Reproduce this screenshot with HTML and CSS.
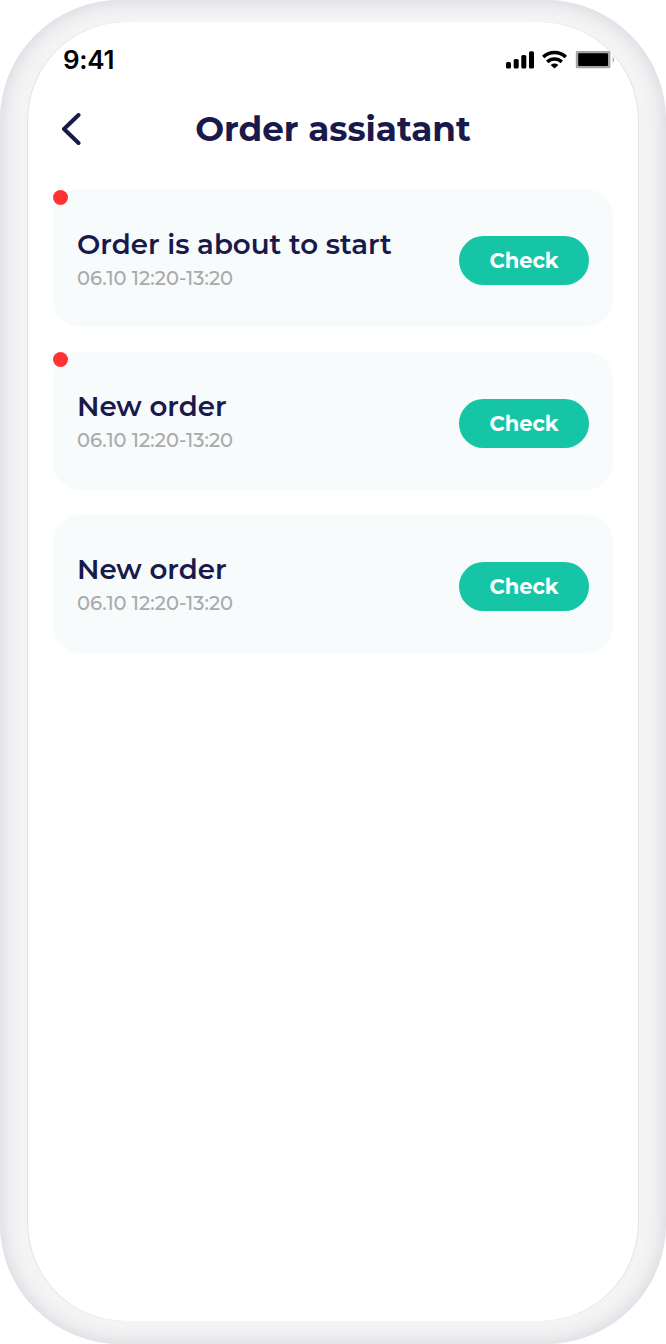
FILE: index.html
```html
<!DOCTYPE html>
<html lang="en">
<head>
  <meta charset="UTF-8" />
  <title>Order assiatant</title>
  <meta name="viewport" content="width=device-width, initial-scale=1" />
  <link rel="stylesheet" href="styles.css">
</head>
<body>
<div class="mobile-frame">
  <div class="screen">
    <div class="status-bar">
      <span class="time">9:41</span>
      <svg class="status-icons" width="110" height="20" viewBox="0 0 110 20">
        <rect x="1" y="12" width="5" height="6.5" rx="1.6"/>
        <rect x="8.7" y="9" width="5" height="9.5" rx="1.6"/>
        <rect x="16.3" y="5" width="5" height="13.5" rx="1.6"/>
        <rect x="24" y="1.2" width="5" height="17.3" rx="1.6"/>
        <g fill="none" stroke="#000" stroke-width="3.5">
          <path d="M38.2 7C44.7.9 54.3.9 60.8 7"/>
          <path d="M42.2 11.9C46.4 8 52.6 8 56.8 11.9"/>
        </g>
        <path d="M45.6 14.9Q49.5 12.1 53.4 14.9L49.5 18.6Z"/>
        <rect x="70.8" y="1" width="34.6" height="17.2" rx="1.5" fill="#a5a5a5"/>
        <rect x="73.2" y="3.2" width="29.8" height="12.8" rx="1"/>
        <path d="M107.6 6.8Q110.6 9.7 107.6 12.6Z" fill="#a5a5a5"/>
      </svg>
    </div>

    <div class="header">
      <svg class="back" width="20" height="34" viewBox="0 0 20 34">
        <path d="M17.5 3L3 17L17.5 31" fill="none" stroke="#19194b" stroke-width="4" stroke-linecap="round" stroke-linejoin="round"/>
      </svg>
      <h1>Order assiatant</h1>
    </div>

    <div class="orders">
      <div class="order">
        <span class="dot"></span>
        <div class="info">
          <h2>Order is about to start</h2>
          <p>06.10 12:20-13:20</p>
        </div>
        <button class="check">Check</button>
      </div>
      <div class="order">
        <span class="dot"></span>
        <div class="info">
          <h2>New order</h2>
          <p>06.10 12:20-13:20</p>
        </div>
        <button class="check">Check</button>
      </div>
      <div class="order">
        <div class="info">
          <h2>New order</h2>
          <p>06.10 12:20-13:20</p>
        </div>
        <button class="check">Check</button>
      </div>
    </div>
  </div>
</div>
</body>
</html>
```
FILE: styles.css
```css
body {
  margin: 0;
  background: #fff;
  font-family: Montserrat, Inter, sans-serif;
}

.mobile-frame {
  width: 666px;
  height: 1344px;
  box-sizing: border-box;
  padding: 22px 28px 23px;
  background: #f4f4f4;
  border-radius: 120px;
  box-shadow: inset 0 0 20px #d0d0da;
}

.screen {
  height: 1299px;
  background: #fff;
  border-radius: 98px;
  box-shadow: -0.6px 0 0 #d6d6d8, 0.6px 0 0 #d6d6d8;
}

.status-bar {
  display: flex;
  justify-content: space-between;
  align-items: center;
  height: 76px;
  padding: 0 23px 0 35px;
}

.time {
  font-family: Inter, sans-serif;
  font-size: 26px;
  font-weight: 600;
  letter-spacing: -0.3px;
  line-height: 30px;
  margin-top: -1px;
  color: #000;
}

.header {
  display: flex;
  align-items: center;
  height: 62px;
  padding: 0 33px;
}

.back {
  width: 20px;
}

h1 {
  flex: 1;
  margin: 0 20px 0 0;
  font-size: 34.2px;
  font-weight: 700;
  line-height: 42px;
  text-align: center;
  white-space: nowrap;
  color: #19194b;
}

.orders {
  display: flex;
  flex-direction: column;
  gap: 24.6px;
  padding: 29.4px 25px 0;
}

.order {
  position: relative;
  display: flex;
  justify-content: space-between;
  align-items: center;
  height: 138px;
  box-sizing: border-box;
  padding: 0 24px;
  background: #f7fbfc;
  border-radius: 27px;
}

.dot {
  position: absolute;
  top: 0.5px;
  left: 0;
  width: 15px;
  height: 15px;
  border-radius: 50%;
  background: #ff3333;
}

.info {
  padding-top: 5px;
}

h2 {
  margin: 0;
  font-size: 27.7px;
  font-weight: 600;
  line-height: 34px;
  white-space: nowrap;
  color: #19194b;
}

p {
  margin: 0;
  font-size: 19.5px;
  font-weight: 500;
  line-height: 34px;
  color: #aaa;
}

.check {
  width: 130px;
  height: 49px;
  margin-top: 5px;
  padding: 0;
  border: none;
  border-radius: 25px;
  background: #16c5a5;
  color: #fff;
  font-family: inherit;
  font-size: 21px;
  font-weight: 700;
}
```
